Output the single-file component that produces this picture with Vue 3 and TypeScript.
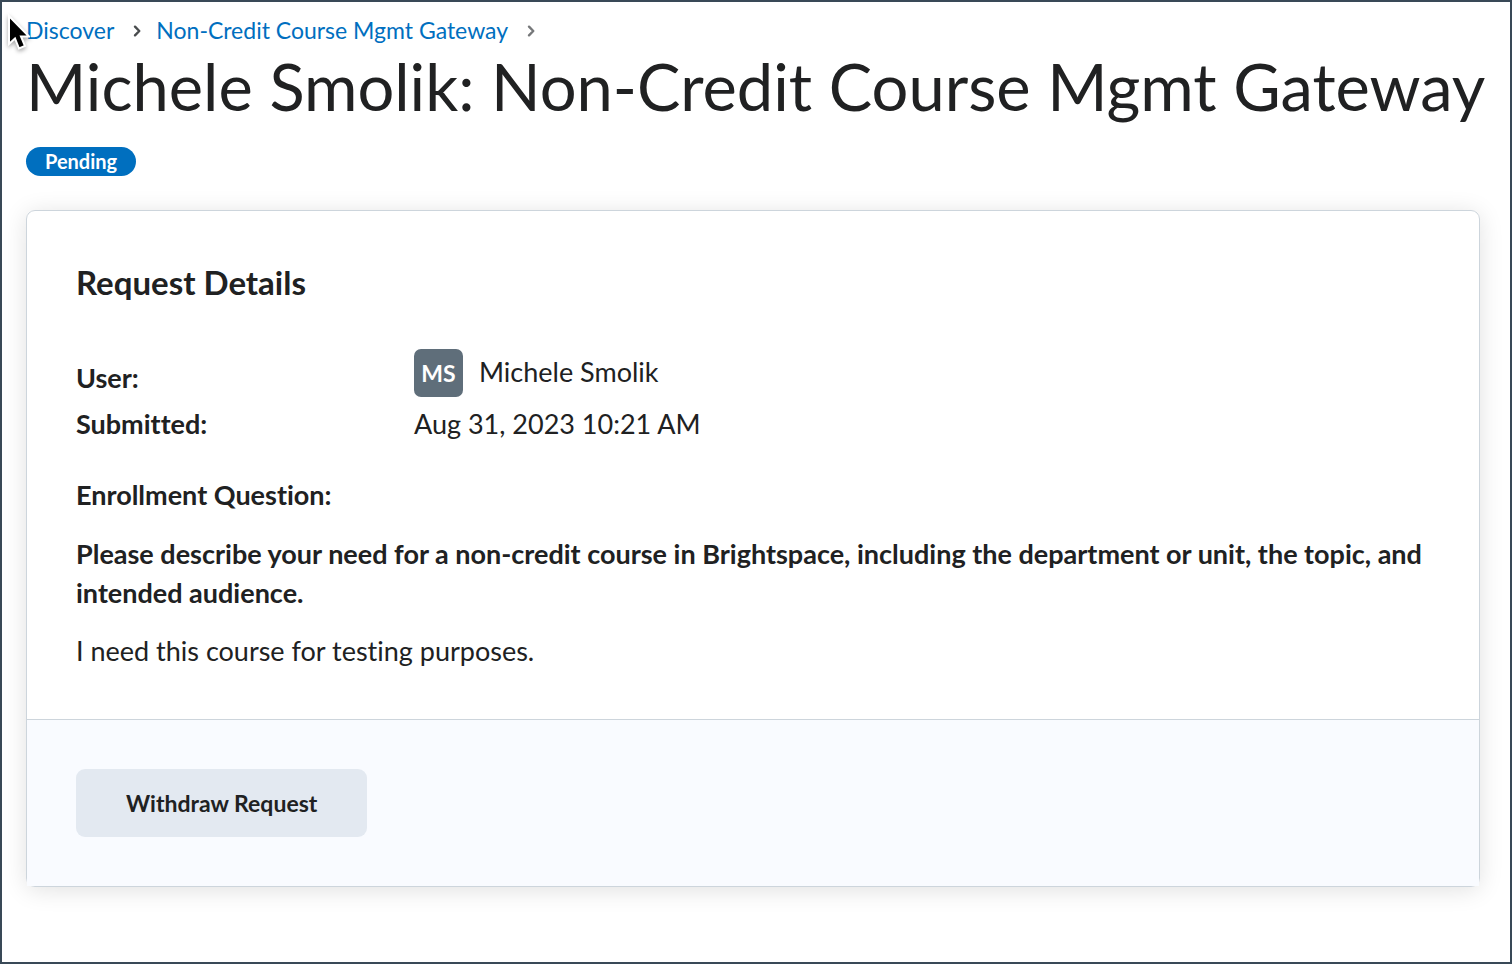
<script setup lang="ts">
interface Crumb {
  label: string
  href: string
}

const crumbs: Crumb[] = [
  { label: 'Discover', href: '#discover' },
  { label: 'Non-Credit Course Mgmt Gateway', href: '#gateway' },
]

const question =
  'Please describe your need for a non-credit course in Brightspace, including the department or unit, the topic, and intended audience.'
</script>

<template>
  <div class="page">
    <nav class="crumbs" aria-label="Breadcrumb">
      <template v-for="(crumb, index) in crumbs" :key="crumb.href">
        <a :href="crumb.href">{{ crumb.label }}</a>
        <svg class="chevron" :class="{ faded: index === crumbs.length - 1 }" viewBox="0 0 8 14" aria-hidden="true">
          <path d="M2 3.7 6.3 8 2 12.3" />
        </svg>
      </template>
    </nav>
    <h1>Michele Smolik: Non-Credit Course Mgmt Gateway</h1>
    <span class="status">Pending</span>

    <main class="card">
      <section class="details">
        <h2>Request Details</h2>
        <dl>
          <dt>User:</dt>
          <dd class="user">
            <span class="avatar" aria-hidden="true">MS</span>
            <span>Michele Smolik</span>
          </dd>
          <dt>Submitted:</dt>
          <dd>Aug 31, 2023 10:21 AM</dd>
        </dl>
        <h3>Enrollment Question:</h3>
        <p class="question">{{ question }}</p>
        <p>I need this course for testing purposes.</p>
      </section>
      <footer>
        <button type="button">Withdraw Request</button>
      </footer>
    </main>

    <svg class="pointer" viewBox="0 0 26 40" aria-hidden="true">
      <path
        d="M5 3 V31 L11 25.5 L15 35.5 L21 33 L17 23.5 H25 Z"
        fill="#000"
        stroke="#fff"
        stroke-width="2"
      />
    </svg>
  </div>
</template>

<style>
body {
  margin: 0;
}
</style>

<style scoped>
.page {
  box-sizing: border-box;
  position: relative;
  min-height: 100vh;
  padding: 11px 30px 24px 24px;
  overflow: hidden;
  border: 2px solid #394957;
  background: #fff;
  color: #202122;
  font-family: Lato, 'Liberation Sans', sans-serif;
  font-size: 27px;
  font-variant-ligatures: none;
  line-height: 39px;
}

.crumbs {
  display: flex;
  align-items: center;
  font-size: 23px;
  line-height: 34px;
}

.crumbs a {
  color: #006fbf;
  text-decoration: none;
}

.chevron {
  width: 8px;
  height: 14px;
  margin: 0 15px 0 19px;
  fill: none;
  stroke: #494c4e;
  stroke-width: 2.4;
  stroke-linecap: round;
  stroke-linejoin: round;
}

.faded {
  opacity: 0.75;
}

h1 {
  margin: 0;
  font-size: 65px;
  font-weight: 400;
  line-height: 78px;
  white-space: nowrap;
}

.status {
  display: block;
  width: fit-content;
  margin-top: 22px;
  padding: 0 19px;
  border-radius: 15px;
  background: #006fbf;
  color: #fff;
  font-size: 20px;
  font-weight: 700;
  line-height: 29px;
}

.card {
  margin-top: 34px;
  border: 1px solid #cdd5dc;
  border-radius: 9px;
  box-shadow: 0 3px 24px rgba(0, 0, 0, 0.12);
}

.details {
  padding: 49px;
}

h2 {
  margin: 0 0 45px;
  font-size: 33px;
  font-weight: 700;
  line-height: 44px;
}

dl {
  display: grid;
  grid-template-columns: 338px 1fr;
  row-gap: 7px;
  margin: 0;
}

dt,
h3,
.question {
  font-weight: 700;
}

dt {
  align-self: end;
}

dd {
  margin: 0;
}

.user {
  display: flex;
  align-items: flex-start;
  gap: 16px;
}

.user > span:last-child {
  line-height: 45px;
}

.avatar {
  width: 49px;
  border-radius: 7px;
  background: #5f6e7a;
  color: #fff;
  font-size: 23px;
  font-weight: 700;
  line-height: 48px;
  text-align: center;
}

h3 {
  margin: 32px 0 20px;
  font-size: 27px;
}

p {
  margin: 0;
}

.question {
  margin-bottom: 19px;
}

footer {
  padding: 49px;
  border-top: 1px solid #cdd5dc;
  background: #f9fbff;
}

button {
  display: block;
  padding: 0 50px;
  border: 0;
  border-radius: 9px;
  background: #e3e9f1;
  color: #202122;
  font-family: inherit;
  font-size: 23px;
  font-weight: 700;
  line-height: 68px;
}

.pointer {
  position: absolute;
  top: 11px;
  left: 2px;
  width: 26px;
  height: 40px;
  filter: drop-shadow(0 2px 2px rgba(0, 0, 0, 0.35));
}
</style>
